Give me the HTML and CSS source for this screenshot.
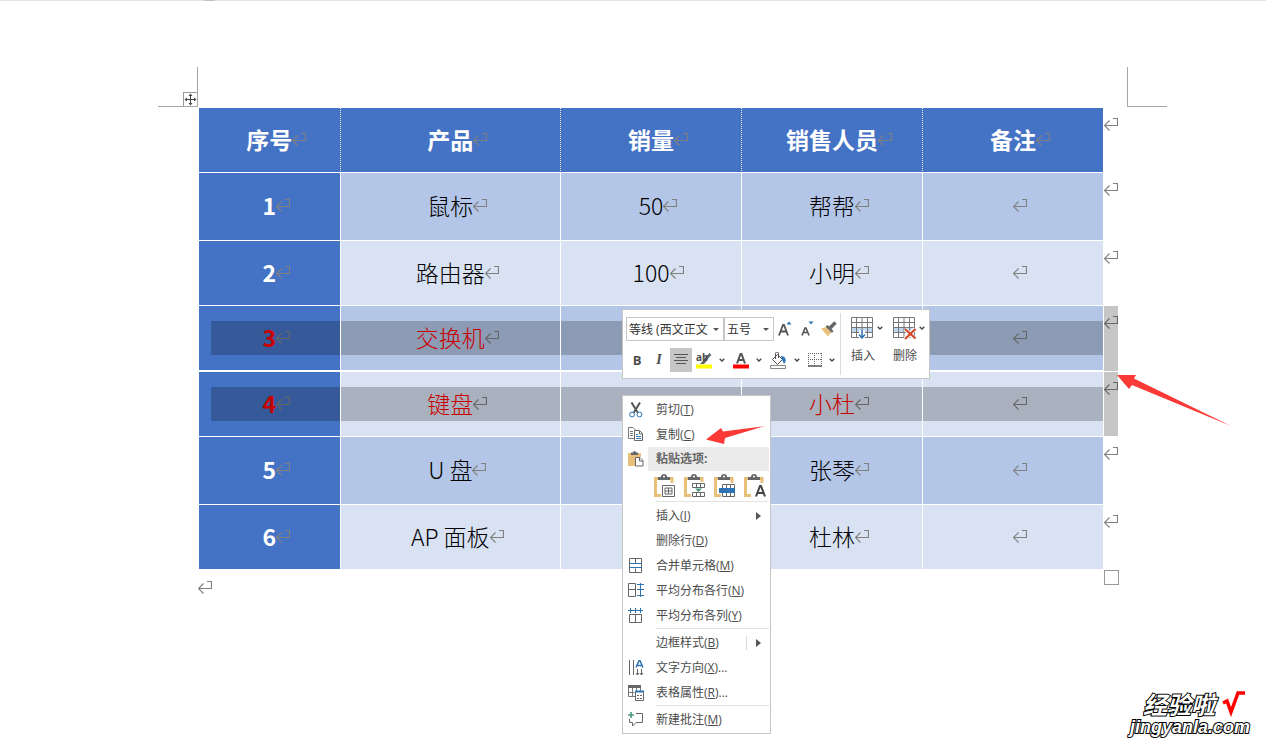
FILE: index.html
```html
<!DOCTYPE html>
<html lang="zh-CN">
<head>
<meta charset="utf-8">
<title>销量表</title>
<link rel="stylesheet" href="styles.css">
</head>
<body>
<svg class="defs" aria-hidden="true">
  <symbol id="mark" viewBox="0 0 14 13"><path d="M9 .5h4.500v7H1M5.500 2.500l-5 5 5 5" fill="none" stroke="currentColor" stroke-width="1.200"/></symbol>
  <symbol id="chev" viewBox="0 0 6 4"><path d="M.7.700 3 3 5.300.700" fill="none" stroke="#444" stroke-width="1.300"/></symbol>
  <symbol id="clip" viewBox="0 0 22 24"><path d="M6 4.500H1.500v17H7M15 4.500h3V9" fill="none" stroke="#e8c07c" stroke-width="3"/><path d="M4 6V3h3a3 3 0 0 1 6 0h3v3z" fill="#666"/><circle cx="10" cy="2.500" r="1" fill="#fff"/></symbol>
</svg>

<div class="ruler"><span></span></div>
<main class="doc">
  <div class="margins">
    <span class="corner corner-left"><span class="handle"><svg width="13" height="13" viewBox="0 0 13 13"><path d="M6.500 1v11M1 6.500h11" stroke="#444" fill="none"/><path d="M6.500.5 8.500 3h-4zM6.500 12.500l-2-2.500h4zM.5 6.500 3 4.500v4zM12.500 6.500 10 8.500v-4z" fill="#444"/></svg></span></span>
    <span class="corner corner-right"></span>
  </div>

  <table class="sheet">
    <colgroup><col class="c-no"><col class="c-name"><col class="c-std"><col class="c-std"><col class="c-std"><col class="c-end"></colgroup>
    <thead>
      <tr class="short"><th>序号<svg class="mark"><use href="#mark"/></svg></th><th>产品<svg class="mark"><use href="#mark"/></svg></th><th>销量<svg class="mark"><use href="#mark"/></svg></th><th>销售人员<svg class="mark"><use href="#mark"/></svg></th><th>备注<svg class="mark"><use href="#mark"/></svg></th><td class="end"><svg class="mark"><use href="#mark"/></svg></td></tr>
    </thead>
    <tbody>
      <tr class="tall"><th>1<svg class="mark"><use href="#mark"/></svg></th><td>鼠标<svg class="mark"><use href="#mark"/></svg></td><td>50<svg class="mark"><use href="#mark"/></svg></td><td>帮帮<svg class="mark"><use href="#mark"/></svg></td><td><svg class="mark"><use href="#mark"/></svg></td><td class="end"><svg class="mark"><use href="#mark"/></svg></td></tr>
      <tr class="short"><th>2<svg class="mark"><use href="#mark"/></svg></th><td>路由器<svg class="mark"><use href="#mark"/></svg></td><td>100<svg class="mark"><use href="#mark"/></svg></td><td>小明<svg class="mark"><use href="#mark"/></svg></td><td><svg class="mark"><use href="#mark"/></svg></td><td class="end"><svg class="mark"><use href="#mark"/></svg></td></tr>
      <tr class="selected first"><th>3<svg class="mark"><use href="#mark"/></svg></th><td>交换机<svg class="mark"><use href="#mark"/></svg></td><td></td><td></td><td><svg class="mark"><use href="#mark"/></svg></td><td class="end"><svg class="mark"><use href="#mark"/></svg></td></tr>
      <tr class="selected short"><th>4<svg class="mark"><use href="#mark"/></svg></th><td>键盘<svg class="mark"><use href="#mark"/></svg></td><td></td><td>小杜<svg class="mark"><use href="#mark"/></svg></td><td><svg class="mark"><use href="#mark"/></svg></td><td class="end"><svg class="mark"><use href="#mark"/></svg></td></tr>
      <tr class="tall"><th>5<svg class="mark"><use href="#mark"/></svg></th><td>U 盘<svg class="mark"><use href="#mark"/></svg></td><td></td><td>张琴<svg class="mark"><use href="#mark"/></svg></td><td><svg class="mark"><use href="#mark"/></svg></td><td class="end"><svg class="mark"><use href="#mark"/></svg></td></tr>
      <tr class="short"><th>6<svg class="mark"><use href="#mark"/></svg></th><td>AP 面板<svg class="mark"><use href="#mark"/></svg></td><td></td><td>杜林<svg class="mark"><use href="#mark"/></svg></td><td><svg class="mark"><use href="#mark"/></svg></td><td class="end"><svg class="mark"><use href="#mark"/></svg></td></tr>
    </tbody>
  </table>
  <div class="after"><svg class="para"><use href="#mark"/></svg><span class="resize"></span></div>
</main>

<div class="toolbar" role="toolbar" aria-label="格式">
  <div class="format">
    <div class="tools">
      <span class="combo font"><select aria-label="字体"><option>等线 (西文正文</option></select></span><span class="combo size"><select aria-label="字号"><option>五号</option></select></span>
      <button aria-label="增大字号"><svg width="14" height="16" viewBox="0 0 14 16"><path d="M1 14.500 5 4h1l4 10.500M2.500 10.500h6" fill="none" stroke="#555" stroke-width="1.800"/><path d="M8.500 3.500 11 .5l2.500 3z" fill="#2e74b5"/></svg></button>
      <button aria-label="减小字号"><svg width="14" height="16" viewBox="0 0 14 16"><path d="M2 14.500 5 7h1l3 7.500M3.200 11.500h4.600" fill="none" stroke="#555" stroke-width="1.600"/><path d="M8.500.5h5l-2.500 3z" fill="#2e74b5"/></svg></button>
      <button aria-label="格式刷"><svg width="16" height="16" viewBox="0 0 16 16"><path d="M0 7.500 5.500 6l5 5L7 15.500z" fill="#e8c07c"/><path d="m4.500 5.500 2-1.500 6 6-1.500 2z" fill="#666"/><path d="m9 7 5.500-5.500" stroke="#666" stroke-width="3.500"/></svg></button>
    </div>
    <div class="tools">
      <button class="bold">B</button><button class="italic">I</button>
      <button class="on" aria-label="居中"><svg width="16" height="12" viewBox="0 0 16 12"><path d="M1 .5h14M3 3.500h10M1 6.500h14M3 9.500h10" stroke="#555"/></svg></button>
      <button class="split" aria-label="突出显示"><span class="hl"><svg width="16" height="17" viewBox="0 0 16 17"><path d="M0 12.500h16v4H0z" fill="#ff0"/><path d="M14.500 2 8 8.500" stroke="#666" stroke-width="2.500"/><path d="M8.500 7 4 12h4l2.500-3z" fill="#666"/></svg><span>ab</span></span><svg class="chev"><use href="#chev"/></svg></button>
      <button class="split" aria-label="字体颜色"><svg width="16" height="17" viewBox="0 0 16 17"><path d="M0 12.500h16v4H0z" fill="red"/><path d="M4 11.500 7.500 2h1L12 11.500M5 8h6" fill="none" stroke="#555" stroke-width="2"/></svg><svg class="chev"><use href="#chev"/></svg></button>
      <button class="split" aria-label="底纹"><svg width="17" height="17" viewBox="0 0 17 17"><path d="M.5 13.500h15v3H.5z" fill="#fff" stroke="#888"/><path d="m7.500 2.500 5 5-5 5-5-5zM5.500 7V1.500a1.500 1.500 0 0 1 3 0V6" fill="none" stroke="#555"/><path d="M11 4c5 0 6 5 3 8-1-2-1-3-2-4z" fill="#2e74b5"/></svg><svg class="chev"><use href="#chev"/></svg></button>
      <button class="split" aria-label="边框"><svg width="14" height="14" viewBox="0 0 14 14"><path d="M0 .5h14M0 6.500h14M.5 0v13M6.500 0v13M13.500 0v13" stroke="#666" stroke-dasharray="1 1"/><path d="M0 13h14" stroke="#555" stroke-width="1.500"/></svg><svg class="chev"><use href="#chev"/></svg></button>
    </div>
  </div>
  <div class="big">
    <button><svg width="22" height="22" viewBox="0 0 22 22"><path d="M1 11h20v5H1z" fill="#bdd7ee"/><path d="M.5.500h21v20H.500zM5.500 1v19M11 1v19M16.500 1v19M1 5.500h20M1 10.500h20M1 15.500h20" fill="none" stroke="#777"/><path d="M8 13h6v9H8z" fill="#fff"/><path d="M11 13v7.500M8 17.500l3 3.500 3-3.500" fill="none" stroke="#2e74b5" stroke-width="1.500"/></svg><svg class="chev"><use href="#chev"/></svg><span>插入</span></button>
    <button><svg width="24" height="24" viewBox="0 0 24 24"><path d="M1 11h20v5H1z" fill="#bdd7ee"/><path d="M.5.500h21v20H.500zM5.500 1v19M11 1v19M16.500 1v19M1 5.500h20M1 10.500h20M1 15.500h20" fill="none" stroke="#777"/><path d="m12 12 10 10M22 12 12 22" stroke="#fff" stroke-width="4"/><path d="m12 12 10.500 9.500M22.500 12 12 22" stroke="#d24726" stroke-width="2.200"/></svg><svg class="chev"><use href="#chev"/></svg><span>删除</span></button>
  </div>
</div>

<div class="menu" role="menu">
  <button class="item" role="menuitem"><svg width="16" height="16" viewBox="0 0 16 16"><path d="m3.500.5 6.500 10.500M12 .5 5.500 11" stroke="#555" stroke-width="2" fill="none"/><circle cx="4" cy="12.500" r="2.400" fill="#fff" stroke="#2e74b5"/><circle cx="11.500" cy="12.500" r="2.400" fill="#fff" stroke="#2e74b5"/></svg><span>剪切(<u>T</u>)</span></button>
  <button class="item" role="menuitem"><svg width="16" height="16" viewBox="0 0 16 16"><path d="M.5.500H5L7.500 3v8.500h-7zM2 4.500h3M2 6.500h3M2 8.500h3" fill="#fff" stroke="#777"/><path d="M6.500 3.500h5l3 3v7h-8zM11.500 4v3h3" fill="#fff" stroke="#666"/><path d="M8 7.500h2M8 9.500h5M8 11.500h5" stroke="#2e74b5"/></svg><span>复制(<u>C</u>)</span></button>
  <div class="item heading"><svg width="16" height="17" viewBox="0 0 16 17"><path d="M0 2h13v4H7v9H0z" fill="#e8c07c"/><path d="M3 4V1.500h2a1.500 1.500 0 0 1 3 0h2V4z" fill="#666"/><path d="M7.500 6.500H12l3 3v5.500H7.500zM11.500 7v3H15" fill="#fff" stroke="#666"/></svg><span>粘贴选项:</span></div>
  <div class="paste">
    <button aria-label="嵌套表"><svg width="22" height="24" viewBox="0 0 22 24"><use href="#clip" width="22" height="24"/><path d="M8.500 11.500h12v11h-12z" fill="#fff" stroke="#666"/><path d="M11 14h7v6h-7zM14.500 14v6M11 17h7" fill="none" stroke="#666"/></svg></button>
    <button aria-label="合并表格"><svg width="22" height="24" viewBox="0 0 22 24"><use href="#clip" width="22" height="24"/><path d="M7 8h15v16H7z" fill="#fff"/><path d="M8.500 9.500h12v4h-12zM12.500 9.500v4M16.500 9.500v4M8.500 18.500h12v4h-12zM12.500 18.500v4M16.500 18.500v4" fill="none" stroke="#666"/><path d="M11 14.500h7L14.500 18z" fill="#4c9b7c"/></svg></button>
    <button aria-label="以新行插入"><svg width="22" height="24" viewBox="0 0 22 24"><use href="#clip" width="22" height="24"/><path d="M7 9h15v15H7z" fill="#fff"/><path d="M8.500 10.500h12v12h-12zM12.500 10.500v12M16.500 10.500v12" fill="none" stroke="#666"/><path d="M5 14h16v5H5z" fill="#2e74b5"/></svg></button>
    <button aria-label="只保留文本"><svg width="22" height="24" viewBox="0 0 22 24"><use href="#clip" width="22" height="24"/><path d="M11 10h11v14H11z" fill="#fff"/><path d="M12 22.500 16 12h1l4 10.500M13 19h7" fill="none" stroke="#444" stroke-width="2"/></svg></button>
  </div>
  <hr>
  <button class="item" role="menuitem"><i></i><span>插入(<u>I</u>)</span><b class="arrow"></b></button>
  <button class="item" role="menuitem"><i></i><span>删除行(<u>D</u>)</span></button>
  <button class="item" role="menuitem"><svg width="16" height="16" viewBox="0 0 16 16"><path d="M1.500.500h12v14h-12zM7.500.500v5M7.500 10.500v4" fill="none" stroke="#666"/><path d="M1 5.500h13M1 9.500h13" stroke="#2e74b5"/></svg><span>合并单元格(<u>M</u>)</span></button>
  <button class="item" role="menuitem"><svg width="16" height="16" viewBox="0 0 16 16"><path d="M.5.500h7v13h-7zM.5 6.500h7" fill="none" stroke="#666"/><path d="M12.500 0v14M9 1.500h7M9 6.500h7M9 12.500h7" stroke="#2e74b5"/></svg><span>平均分布各行(<u>N</u>)</span></button>
  <button class="item" role="menuitem"><svg width="16" height="16" viewBox="0 0 16 16"><path d="M1.500 6.500h12v8h-12zM7.500 6.500v8" fill="none" stroke="#666"/><path d="M0 2.500h15M2.500 0v5M7.500 0v5M12.500 0v5" stroke="#2e74b5"/></svg><span>平均分布各列(<u>Y</u>)</span></button>
  <hr>
  <button class="item" role="menuitem"><i></i><span>边框样式(<u>B</u>)</span><b class="arrow divided"></b></button>
  <button class="item" role="menuitem"><svg width="16" height="16" viewBox="0 0 16 16"><path d="M1.500 0v15M5.500 0v15M9.500 9v6M13.500 9v6M8 13l1.500 2 1.500-2M12 13l1.500 2 1.500-2" fill="none" stroke="#666"/><path d="M8 7.500 11 .8h1l3 6.700M9 5.500h5" fill="none" stroke="#2e74b5" stroke-width="1.500"/></svg><span>文字方向(<u>X</u>)...</span></button>
  <button class="item" role="menuitem"><svg width="16" height="16" viewBox="0 0 16 16"><path d="M.5.500h12v11H.500zM4.500 3v8M8.500 3v3M.5 7.500h6" fill="none" stroke="#777"/><path d="M0 0h13v3H0z" fill="#666"/><path d="M7.500 6.500h8v9h-8z" fill="#fff" stroke="#666"/><path d="M7 5.500h9v2H7z" fill="#2e74b5"/><path d="M9 10.500h2M12 10.500h2M9 13.500h2M12 13.500h2" stroke="#666"/></svg><span>表格属性(<u>R</u>)...</span></button>
  <hr>
  <button class="item" role="menuitem"><svg width="16" height="16" viewBox="0 0 16 16"><path d="M8 1.500h6.500v9H8L4.500 14v-3.500h-3V7" fill="none" stroke="#666"/><path d="M3 0v6M0 3h6" stroke="#4c9b7c" stroke-width="1.600"/></svg><span>新建批注(<u>M</u>)</span></button>
</div>

<svg class="pointer pointer-copy" viewBox="0 0 59 18"><path d="M0 13.500 15 2l2 3.500L59 0 19 12l-1 6z" fill="#fb3a37"/></svg>
<svg class="pointer pointer-rows" viewBox="0 0 114 52"><path d="M0 0h19l-2 3.500L114 51 15 10l-3 4z" fill="#fb3a37"/></svg>

<div class="brand">
  <div class="brand-name"><span>经验啦</span><svg width="24" height="26" viewBox="0 0 24 26"><path d="m2 12 4-2 4 11L17 2h7" fill="none" stroke="red" stroke-width="3.500"/></svg></div>
  <div class="brand-site">jingyanla.com</div>
</div>
</body>
</html>
```
FILE: styles.css
```css
* { box-sizing: border-box; }
body {
  margin: 0;
  min-height: 100vh;
  position: relative;
  overflow: hidden;
  background: #fff;
  font: 12px "Liberation Sans", "Noto Sans CJK SC", sans-serif;
  color: #4c4c4c;
}
.defs { position: absolute; width: 0; height: 0; }
button {
  border: 0;
  padding: 0;
  margin: 0;
  background: none;
  font: inherit;
  color: inherit;
}

/* Document */
.ruler { display: flex; height: 1px; padding-left: 204px; background: #e3e3e3; }
.ruler span { width: 11px; background: #c0c0c0; }
.doc { padding: 66px 99px 0 158px; }
.margins { display: flex; justify-content: space-between; }
.corner { width: 40px; height: 40px; border-bottom: 1px solid #a6a6a6; }
.corner-left {
  display: flex;
  justify-content: flex-end;
  align-items: flex-end;
  border-right: 1px solid #a6a6a6;
}
.corner-right { border-left: 1px solid #a6a6a6; }
.handle { display: flex; border: 1px solid #999; border-right: 0; border-bottom: 0; }

.sheet {
  width: calc(100% - 90px);
  margin: 1px 50px 0 41px;
  table-layout: fixed;
  border-collapse: separate;
  border-spacing: 0;
  font: 300 23px/34px "Noto Sans CJK SC", sans-serif;
  color: #000;
}
.c-no { width: 15.400%; }
.c-name { width: 24%; }
.c-end { width: 14px; }
.short { height: 65px; }
.tall { height: 68px; }
.first { height: 66px; }
.sheet th, .sheet td {
  padding: 0 0 3px;
  text-align: center;
  vertical-align: middle;
  border-right: 1px solid #fff;
  border-bottom: 1px solid #fff;
  background: #d9e2f3;
}
.sheet tbody tr:nth-child(odd) td { background-color: #b4c6e7; }
.sheet th { background-color: #4472c4; color: #fff; font-weight: 700; }
.sheet thead th { border-right: 1px dotted #f0e8dc; }
.sheet thead th:nth-child(5) { border-right: 1px solid #fff; }
.mark { width: 14px; height: 13px; margin-right: -14px; color: #808080; vertical-align: 3px; }
.sheet .selected th, .sheet .selected td {
  color: #c80000;
  background-image: linear-gradient(rgba(0, 0, 0, .22), rgba(0, 0, 0, .22));
  background-size: 100% 34px;
  background-position: right 15px;
  background-repeat: no-repeat;
}
.sheet .selected th { background-size: calc(100% - 12px) 34px; }
.selected .mark { color: #666; }
.sheet .first > * { border-bottom-width: 2px; }
.sheet tbody tr .end.end, .sheet thead .end {
  padding-top: 10px;
  border-right: 0;
  background: #fff;
  line-height: 0;
  text-align: right;
  vertical-align: top;
}
.sheet tbody .selected .end.end { background: #c6c6c6; border-bottom-width: 1px; }
.sheet .end .mark { margin: 0; vertical-align: 0; }
.after { display: flex; justify-content: space-between; margin: 0 48px 0 40px; }
.para { width: 14px; height: 13px; margin-top: 11px; color: #808080; }
.resize { width: 15px; height: 15px; border: 1px solid #999; }

/* Floating toolbar */
.toolbar {
  position: absolute;
  left: 622px;
  top: 309px;
  display: flex;
  padding: 3px;
  background: #fff;
  border: 1px solid #c6c6c6;
}
.format { display: grid; gap: 7px; padding: 4px 0 3px; }
.tools { display: flex; height: 24px; }
.tools button { display: flex; align-items: center; justify-content: center; width: 22px; }
.tools .split { width: 37px; gap: 7px; }
.combo { position: relative; border: 1px solid #c6c6c6; }
.combo::after {
  content: "";
  position: absolute;
  right: 4px;
  top: 10px;
  border: 3px solid transparent;
  border-top-color: #555;
}
.combo select {
  appearance: none;
  width: 100%;
  height: 100%;
  padding: 0 0 0 2px;
  border: 0;
  background: none;
  font: 12px "Open Sans", "Noto Sans CJK SC", sans-serif;
  color: #333;
}
.font { width: 98px; }
.size { width: 50px; }
.chev { width: 6px; height: 4px; }
.tools .bold { font: 700 13px "Open Sans", sans-serif; }
.tools .italic { font: italic 700 14px "Liberation Serif", serif; }
.tools .on { background: #c6c6c6; }
.hl { position: relative; display: flex; }
.hl span { position: absolute; left: 0; top: 0; font: 700 10px/10px "Open Sans", sans-serif; }
.big { display: flex; padding-left: 1px; border-left: 1px solid #dcdcdc; }
.big button {
  display: grid;
  grid-template-columns: 24px 7px;
  grid-template-rows: 24px 18px;
  column-gap: 2px;
  row-gap: 6px;
  align-content: start;
  padding: 4px 0 0 9px;
}
.big .chev { margin-top: 9px; }
.big span { line-height: 18px; }

/* Context menu */
.menu {
  position: absolute;
  left: 622px;
  top: 395px;
  width: 149px;
  padding: 1px;
  background: #fff;
  border: 1px solid #c6c6c6;
  font-family: "Open Sans", "Noto Sans CJK SC", sans-serif;
}
.item {
  display: grid;
  grid-template-columns: 16px 1fr auto;
  column-gap: 12px;
  align-items: center;
  width: 100%;
  height: 25px;
  padding: 0 8px 0 4px;
  line-height: 18px;
  text-align: left;
}
.heading {
  height: 24px;
  font-weight: 700;
  color: #666;
  background: linear-gradient(#ebebeb, #ebebeb) right / calc(100% - 24px) 100% no-repeat;
}
.paste { display: flex; gap: 8px; height: 30px; padding: 0 0 0 30px; align-items: center; }
.paste button { display: flex; }
.menu hr { height: 1px; margin: 0 0 1px 32px; border: 0; background: #e1e1e1; }
.arrow { border: 4px solid transparent; border-left: 5px solid #555; border-right: 0; }
.divided { position: relative; }
.divided::before { content: ""; position: absolute; left: -15px; top: -7px; height: 14px; border-left: 1px solid #dcdcdc; }

.pointer { position: absolute; }
.pointer-copy { left: 706px; top: 426px; width: 59px; height: 18px; }
.pointer-rows { left: 1117px; top: 375px; width: 114px; height: 52px; }

.brand {
  position: absolute;
  right: 16px;
  bottom: 6px;
  color: #fff;
  paint-order: stroke fill;
  -webkit-text-stroke: 2px #000;
}
.brand-name {
  display: flex;
  justify-content: flex-end;
  gap: 6px;
  padding-right: 5px;
  font: italic 700 24px/26px "Noto Sans CJK SC", sans-serif;
}
.brand-site { font: italic 700 18px/20px "Liberation Sans", sans-serif; }
```
